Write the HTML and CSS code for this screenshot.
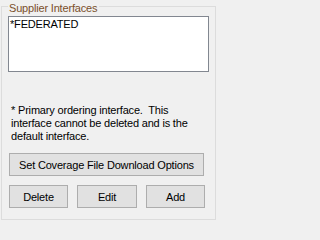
FILE: index.html
```html
<!DOCTYPE html>
<html>
<head>
<meta charset="utf-8">
<link rel="stylesheet" href="styles.css">
</head>
<body>
<div class="group">
  <div class="legend">Supplier Interfaces</div>
  <div class="listbox">
    <div class="item">*FEDERATED</div>
  </div>
  <p class="note">* Primary ordering interface.&nbsp; This interface cannot be deleted and is the default interface.</p>
  <button class="btn wide">Set Coverage File Download Options</button>
  <div class="row">
    <button class="btn">Delete</button>
    <button class="btn">Edit</button>
    <button class="btn">Add</button>
  </div>
</div>
</body>
</html>
```

FILE: styles.css
```css
html, body {
  margin: 0;
  padding: 0;
  background: #f0f0f0;
}
body {
  font-family: "Liberation Sans", Arial, sans-serif;
  font-size: 11px;
  line-height: 13px;
  letter-spacing: -0.18px;
  color: #000;
  width: 217px;
  height: 222px;
  overflow: hidden;
}
.group {
  position: relative;
  box-sizing: border-box;
  margin: 6px 1px 0 1px;
  width: 215px;
  height: 214px;
  border: 1px solid #dcdcdc;
  padding: 0 0 0 6px;
}
.legend {
  position: absolute;
  top: -5px;
  left: 6px;
  padding: 0 2px 0 1px;
  background: #f0f0f0;
  color: #7a4f2a;
}
.listbox {
  box-sizing: border-box;
  margin-top: 9px;
  width: 201px;
  height: 56px;
  border: 1px solid #828790;
  background: #fff;
  padding: 1px 0 0 1px;
}
.note {
  margin: 32px 0 0 3px;
  width: 192px;
}
.btn {
  box-sizing: border-box;
  display: block;
  height: 23px;
  margin: 0;
  padding: 0;
  border: 1px solid #adadad;
  background: #e1e1e1;
  font-family: inherit;
  font-size: 11px;
  letter-spacing: -0.18px;
  color: #000;
}
.wide {
  margin: 10px 0 0 1px;
  width: 195px;
}
.row {
  display: grid;
  grid-template-columns: 59px 60px 59px;
  column-gap: 9px;
  margin: 9px 0 0 1px;
  width: 195px;
}
.row .btn {
  width: 100%;
}
```
